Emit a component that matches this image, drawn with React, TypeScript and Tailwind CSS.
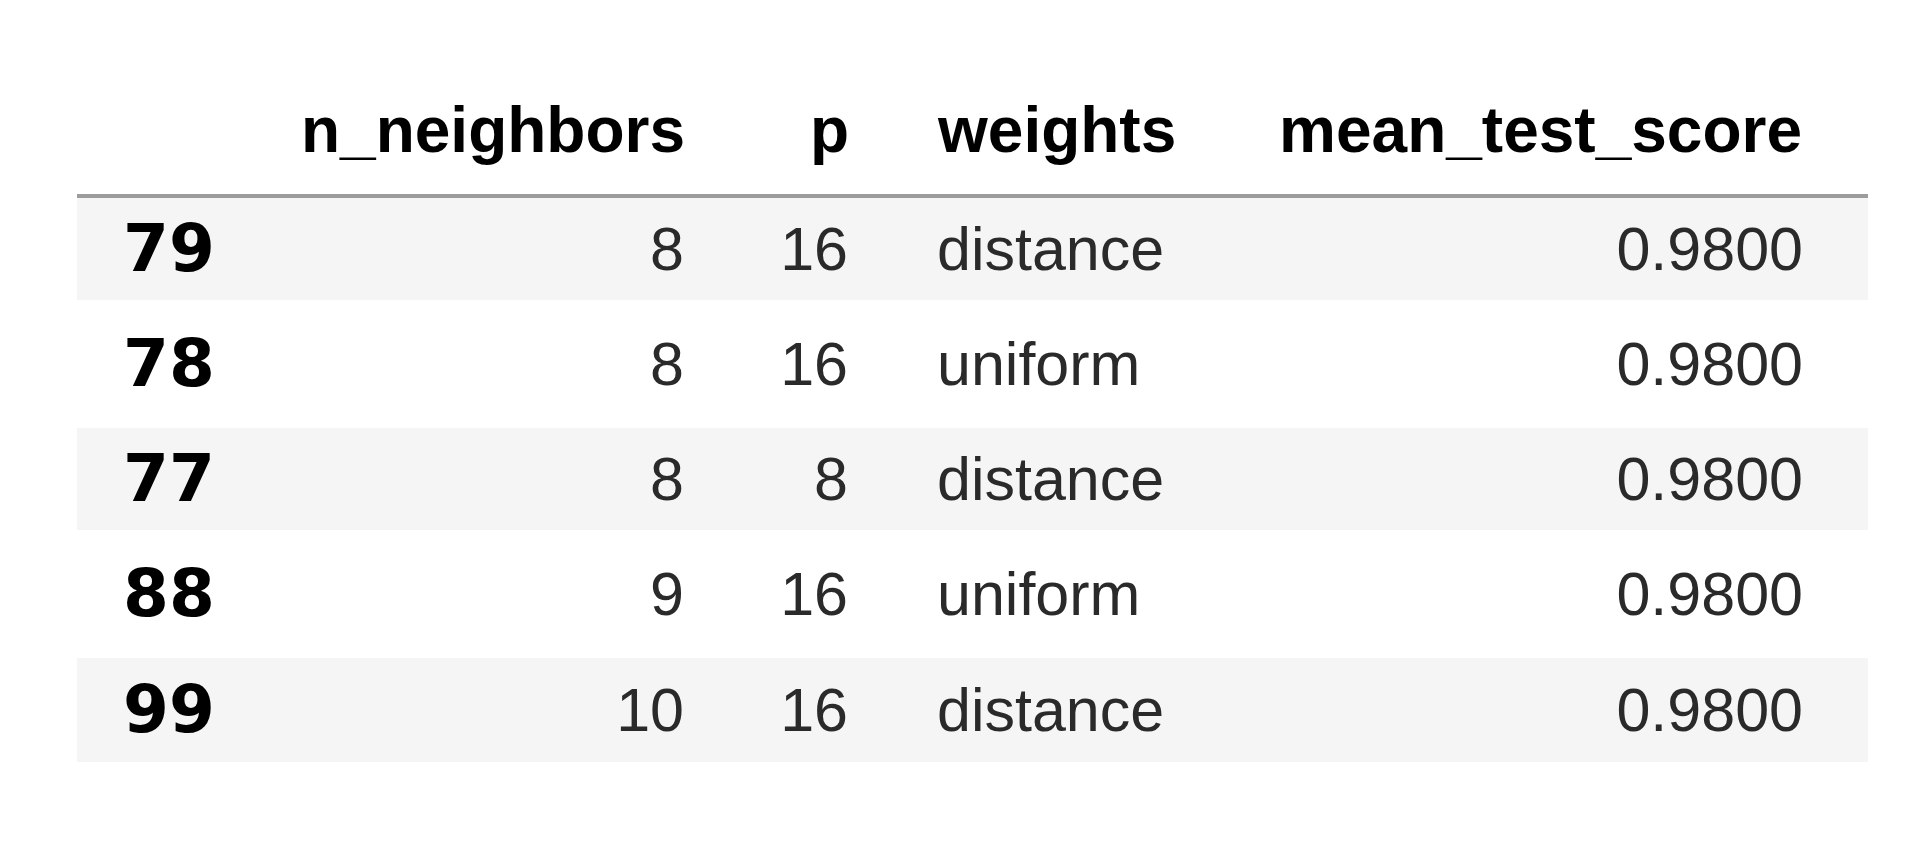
import React from 'react';

type Row = { idx: string; n: string; p: string; w: string; score: string; h: string; striped: boolean };

const ROWS: Row[] = [
    { idx: '79', n: '8', p: '16', w: 'distance', score: '0.9800', h: 'h-[102px]', striped: true },
    { idx: '78', n: '8', p: '16', w: 'uniform', score: '0.9800', h: 'h-[128px]', striped: false },
    { idx: '77', n: '8', p: '8', w: 'distance', score: '0.9800', h: 'h-[102px]', striped: true },
    { idx: '88', n: '9', p: '16', w: 'uniform', score: '0.9800', h: 'h-[128px]', striped: false },
    { idx: '99', n: '10', p: '16', w: 'distance', score: '0.9800', h: 'h-[104px]', striped: true },
];

const cols = 'grid grid-cols-[185px_458px_164px_346px_638px]';

const App: React.FC = () => {
    return (
        <div className="min-h-[856px] w-[1920px] bg-white pl-[77px]">
            <div className="w-[1791px]">
                {/* Header */}
                <div
                    className={`${cols} h-[198px] items-end border-b-4 border-[#9c9c9c] pb-[32px] text-[64px] leading-[64px] font-bold text-black`}
                    style={{ fontFamily: '"Liberation Sans", Arial, sans-serif' }}
                >
                    <div />
                    <div className="pr-[35px] text-right">n_neighbors</div>
                    <div className="pr-[35px] text-right">p</div>
                    <div className="pl-[54px] text-left">weights</div>
                    <div className="pr-[66px] text-right">mean_test_score</div>
                </div>

                {/* Body */}
                {ROWS.map(r => (
                    <div
                        key={r.idx}
                        className={`${cols} ${r.h} items-center ${r.striped ? 'bg-[#f5f5f5]' : 'bg-white'} text-[61px] leading-none text-[#2a2a2a]`}
                        style={{ fontFamily: '"Liberation Sans", Arial, sans-serif' }}
                    >
                        <div
                            className="pl-[46px] text-[66px] font-bold text-black"
                            style={{ fontFamily: '"DejaVu Sans", Verdana, sans-serif' }}
                        >
                            {r.idx}
                        </div>
                        <div className="pr-[36px] text-right">{r.n}</div>
                        <div className="pr-[36px] text-right">{r.p}</div>
                        <div className="pl-[53px] text-left">{r.w}</div>
                        <div className="pr-[65px] text-right">{r.score}</div>
                    </div>
                ))}
            </div>
        </div>
    );
};

export default App;
